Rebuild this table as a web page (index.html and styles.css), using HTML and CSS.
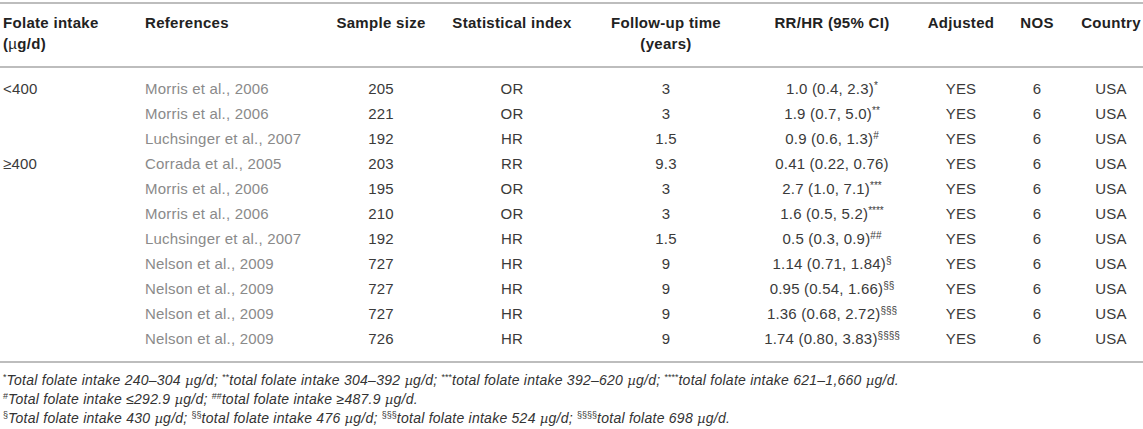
FILE: index.html
```html
<!DOCTYPE html>
<html lang="en">
<head>
    <meta charset="UTF-8">
    <title>Folate intake studies</title>
    <link rel="stylesheet" href="styles.css">
</head>
<body>
    <table class="study-table">
        <colgroup>
            <col class="w-intake">
            <col class="w-ref">
            <col class="w-sample">
            <col class="w-index">
            <col class="w-follow">
            <col class="w-rr">
            <col class="w-adj">
            <col class="w-nos">
            <col class="w-country">
        </colgroup>
        <thead>
            <tr>
                <th class="left">Folate intake<br>(<span class="mu">µ</span>g/d)</th>
                <th class="left">References</th>
                <th>Sample size</th>
                <th>Statistical index</th>
                <th>Follow-up time<br>(years)</th>
                <th>RR/HR (95% CI)</th>
                <th>Adjusted</th>
                <th>NOS</th>
                <th>Country</th>
            </tr>
        </thead>
        <tbody>
            <tr>
                <td class="left">&lt;400</td>
                <td class="left ref">Morris et al., 2006</td>
                <td>205</td><td>OR</td><td>3</td>
                <td>1.0 (0.4, 2.3)<sup>*</sup></td>
                <td>YES</td><td>6</td><td>USA</td>
            </tr>
            <tr>
                <td class="left"></td>
                <td class="left ref">Morris et al., 2006</td>
                <td>221</td><td>OR</td><td>3</td>
                <td>1.9 (0.7, 5.0)<sup>**</sup></td>
                <td>YES</td><td>6</td><td>USA</td>
            </tr>
            <tr>
                <td class="left"></td>
                <td class="left ref">Luchsinger et al., 2007</td>
                <td>192</td><td>HR</td><td>1.5</td>
                <td>0.9 (0.6, 1.3)<sup>#</sup></td>
                <td>YES</td><td>6</td><td>USA</td>
            </tr>
            <tr>
                <td class="left">≥400</td>
                <td class="left ref">Corrada et al., 2005</td>
                <td>203</td><td>RR</td><td>9.3</td>
                <td>0.41 (0.22, 0.76)</td>
                <td>YES</td><td>6</td><td>USA</td>
            </tr>
            <tr>
                <td class="left"></td>
                <td class="left ref">Morris et al., 2006</td>
                <td>195</td><td>OR</td><td>3</td>
                <td>2.7 (1.0, 7.1)<sup>***</sup></td>
                <td>YES</td><td>6</td><td>USA</td>
            </tr>
            <tr>
                <td class="left"></td>
                <td class="left ref">Morris et al., 2006</td>
                <td>210</td><td>OR</td><td>3</td>
                <td>1.6 (0.5, 5.2)<sup>****</sup></td>
                <td>YES</td><td>6</td><td>USA</td>
            </tr>
            <tr>
                <td class="left"></td>
                <td class="left ref">Luchsinger et al., 2007</td>
                <td>192</td><td>HR</td><td>1.5</td>
                <td>0.5 (0.3, 0.9)<sup>##</sup></td>
                <td>YES</td><td>6</td><td>USA</td>
            </tr>
            <tr>
                <td class="left"></td>
                <td class="left ref">Nelson et al., 2009</td>
                <td>727</td><td>HR</td><td>9</td>
                <td>1.14 (0.71, 1.84)<sup>§</sup></td>
                <td>YES</td><td>6</td><td>USA</td>
            </tr>
            <tr>
                <td class="left"></td>
                <td class="left ref">Nelson et al., 2009</td>
                <td>727</td><td>HR</td><td>9</td>
                <td>0.95 (0.54, 1.66)<sup>§§</sup></td>
                <td>YES</td><td>6</td><td>USA</td>
            </tr>
            <tr>
                <td class="left"></td>
                <td class="left ref">Nelson et al., 2009</td>
                <td>727</td><td>HR</td><td>9</td>
                <td>1.36 (0.68, 2.72)<sup>§§§</sup></td>
                <td>YES</td><td>6</td><td>USA</td>
            </tr>
            <tr>
                <td class="left"></td>
                <td class="left ref">Nelson et al., 2009</td>
                <td>726</td><td>HR</td><td>9</td>
                <td>1.74 (0.80, 3.83)<sup>§§§§</sup></td>
                <td>YES</td><td>6</td><td>USA</td>
            </tr>
        </tbody>
    </table>

    <div class="notes">
        <p><sup>*</sup>Total folate intake 240–304 <span class="mu">µ</span>g/d; <sup>**</sup>total folate intake 304–392 <span class="mu">µ</span>g/d; <sup>***</sup>total folate intake 392–620 <span class="mu">µ</span>g/d; <sup>****</sup>total folate intake 621–1,660 <span class="mu">µ</span>g/d.</p>
        <p><sup>#</sup>Total folate intake ≤292.9 <span class="mu">µ</span>g/d; <sup>##</sup>total folate intake ≥487.9 <span class="mu">µ</span>g/d.</p>
        <p><sup>§</sup>Total folate intake 430 <span class="mu">µ</span>g/d; <sup>§§</sup>total folate intake 476 <span class="mu">µ</span>g/d; <sup>§§§</sup>total folate intake 524 <span class="mu">µ</span>g/d; <sup>§§§§</sup>total folate 698 <span class="mu">µ</span>g/d.</p>
    </div>
</body>
</html>
```

FILE: styles.css
```css
* {
    margin: 0;
    padding: 0;
    box-sizing: border-box;
}

body {
    background-color: #ffffff;
    color: #333;
    font-family: "Liberation Sans", Arial, sans-serif;
}

.study-table {
    width: 100%;
    margin-top: 2px;
    border-collapse: collapse;
    table-layout: fixed;
    border-top: 2px solid #bdbdbd;
    font-size: 15px;
    letter-spacing: 0.2px;
}

.w-intake { width: 142px; }
.w-ref { width: 191px; }
.w-sample { width: 96px; }
.w-index { width: 166px; }
.w-follow { width: 142px; }
.w-rr { width: 190px; }
.w-adj { width: 68px; }
.w-nos { width: 84px; }
.w-country { width: 64px; }

.study-table th {
    padding: 8px 0 12px;
    line-height: 21px;
    font-weight: bold;
    color: #222;
    text-align: center;
    vertical-align: top;
    white-space: nowrap;
    border-bottom: 2px solid #bdbdbd;
    letter-spacing: 0.3px;
}

.study-table th .mu {
    font-weight: normal;
}

.study-table td {
    height: 25px;
    line-height: 25px;
    text-align: center;
    white-space: nowrap;
    color: #3a3a3a;
}

.study-table .left {
    text-align: left;
    padding-left: 3px;
}

.study-table td.ref {
    color: #8a8a8a;
}

.study-table tbody tr:first-child td {
    padding-top: 8px;
    height: 33px;
}

.study-table tbody tr:last-child td {
    padding-bottom: 10px;
    height: 35px;
    border-bottom: 2px solid #bdbdbd;
}

sup {
    font-size: 10px;
    line-height: 0;
    vertical-align: 5px;
    letter-spacing: 0;
}

.notes {
    margin-top: 8px;
    padding-left: 3px;
    font-size: 14px;
    line-height: 19px;
    letter-spacing: 0.25px;
    font-style: italic;
    color: #333;
}

.notes sup {
    font-size: 9px;
    font-style: normal;
}

.notes .mu {
    font-family: "DejaVu Serif", serif;
    font-size: 13px;
}
```
